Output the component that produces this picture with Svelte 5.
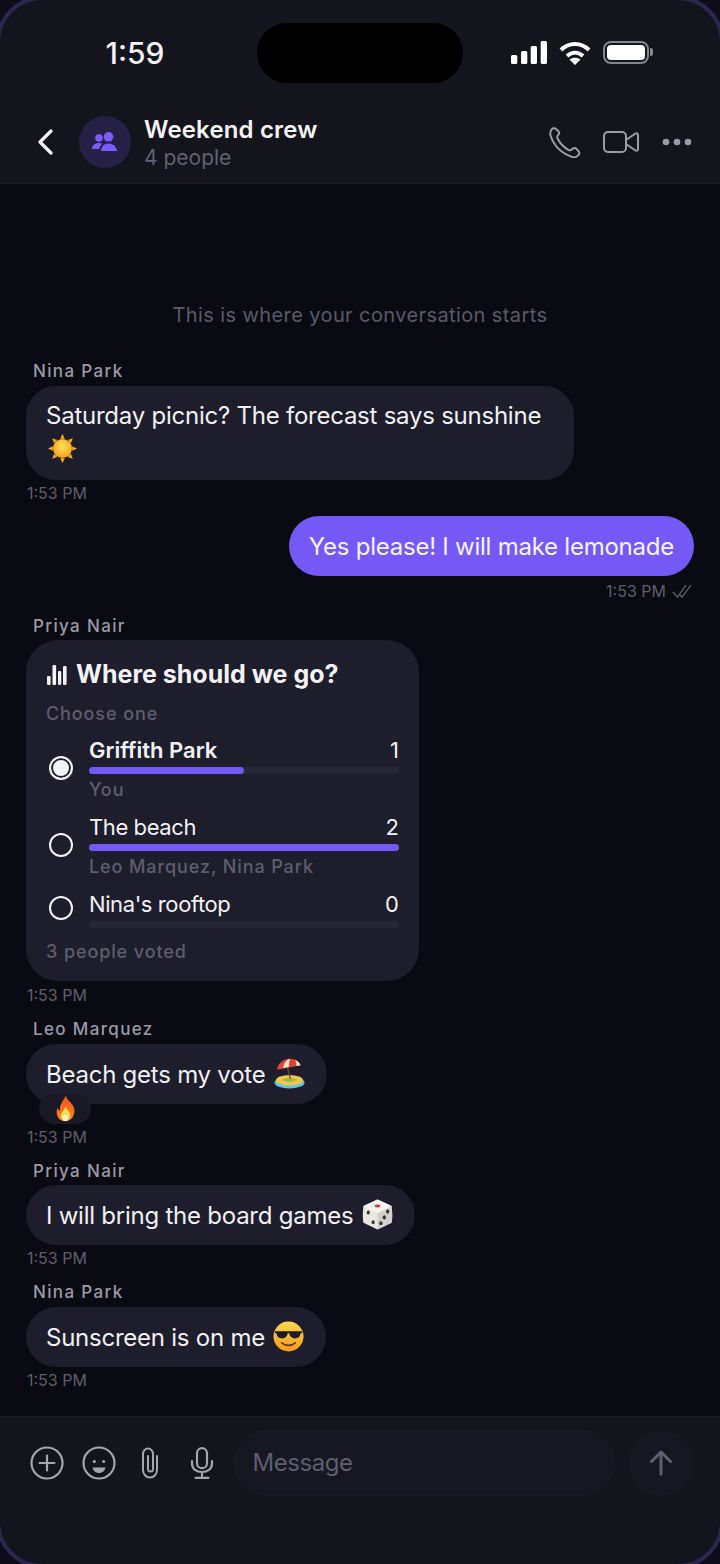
<script>
	const options = [
		{ name: 'Griffith Park', count: 1, pct: 50, voters: 'You', selected: true },
		{ name: 'The beach', count: 2, pct: 100, voters: 'Leo Marquez, Nina Park' },
		{ name: "Nina's rooftop", count: 0, pct: 0, voters: '' }
	];
</script>

{#snippet sun()}
	<svg class="emoji sun" viewBox="0 0 32 32">
		<defs>
			<radialGradient id="sun-fill" cx="0.5" cy="0.4" r="0.6">
				<stop offset="0%" stop-color="#ffe25a" />
				<stop offset="100%" stop-color="#f9a11b" />
			</radialGradient>
		</defs>
		<g fill="#f5ac1e">
			<path d="M16 1l2.400 5h-4.800zM16 31l-2.400-5h4.800zM1 16l5-2.400v4.800zM31 16l-5 2.400v-4.800z" />
			<path d="M5.400 5.400l5.200 1.900-3.300 3.300zM26.600 5.400l-1.900 5.200-3.300-3.300zM5.400 26.600l1.900-5.200 3.300 3.300zM26.600 26.600l-5.200-1.900 3.300-3.300z" />
		</g>
		<circle cx="16" cy="16" r="9.800" fill="url(#sun-fill)" />
	</svg>
{/snippet}

{#snippet beach()}
	<svg class="emoji" viewBox="0 0 32 32">
		<ellipse cx="16" cy="25.500" rx="15.500" ry="6" fill="#5cc6e8" />
		<ellipse cx="16" cy="23" rx="14" ry="5.500" fill="#f3c64f" />
		<path d="M8 22.500c4-2 12-2 16-.5-3 3.500-12 3.500-16 .5z" fill="#a3b83f" />
		<path d="M13.500 8.500l3.500 13" stroke="#6e4a2c" stroke-width="1.500" fill="none" />
		<path d="M3 12C4.500 3.500 13-1 21 1.500c3.500 1.100 5.500 3.500 6.500 6z" fill="#e2452f" />
		<path d="M9.500 10.500C10 6 12.500 2 16.500.8c-1 3-1.300 5.800-1 8.200zM21.500 1.700c1.400 1.300 1.800 3.700 1.500 6.500l4.500-.7c-1-2.700-3-4.800-6-5.800z" fill="#f6e7c6" />
	</svg>
{/snippet}

{#snippet fire()}
	<svg class="emoji" viewBox="0 0 32 32">
		<defs>
			<linearGradient id="fire-fill" x1="0" y1="0" x2="0" y2="1">
				<stop offset="0%" stop-color="#f4511e" />
				<stop offset="100%" stop-color="#fb8c1c" />
			</linearGradient>
		</defs>
		<path d="M16.500 1c1 5 7 8 9.300 13.500C28.500 21 24.500 31 16 31S3.500 22.500 6.500 15c.6 2 1.700 3.200 3 3.800C8.500 12 13 7 16.500 1z" fill="url(#fire-fill)" />
		<path d="M16 14c.8 3 5.500 5.500 5.500 10 0 3.500-2.500 7-5.500 7s-5.500-3.200-5.500-6.500C10.500 20 15 18 16 14z" fill="#ffd95a" />
		<ellipse cx="16" cy="27" rx="3.200" ry="3.800" fill="#fff3c4" />
	</svg>
{/snippet}

{#snippet dice()}
	<svg class="emoji" viewBox="0 0 32 32">
		<path d="M16 .5l14.500 6.700c.9 7.500.9 12 0 17.300L16 31.500 1.500 24.500c-.9-5.300-.9-9.800 0-17.300z" fill="#e9e7e3" />
		<path d="M16 14.500L30.500 7.200c.9 7.500.9 12 0 17.300L16 31.500z" fill="#d4d1cc" />
		<path d="M16 .5l14.500 6.700L16 14.500 1.500 7.200z" fill="#f6f5f2" />
		<ellipse cx="16" cy="7.300" rx="3" ry="1.500" fill="#d8392f" />
		<g fill="#35332f">
			<ellipse cx="6.500" cy="14" rx="1.600" ry="2.100" />
			<ellipse cx="11.500" cy="24" rx="1.600" ry="2.100" />
			<ellipse cx="26.500" cy="13" rx="1.700" ry="2.100" />
			<ellipse cx="23" cy="19" rx="1.700" ry="2.100" />
			<ellipse cx="19.500" cy="25" rx="1.700" ry="2.100" />
		</g>
	</svg>
{/snippet}

{#snippet cool()}
	<svg class="emoji" viewBox="0 0 32 32">
		<defs>
			<linearGradient id="cool-fill" x1="0" y1="0" x2="0" y2="1">
				<stop offset="0%" stop-color="#ffd84f" />
				<stop offset="100%" stop-color="#f59a1d" />
			</linearGradient>
		</defs>
		<circle cx="16" cy="16" r="15.500" fill="url(#cool-fill)" />
		<path d="M2 10.500h28v2.200h-1.500c-.4 3.600-2.700 5.300-6 5.300-3 0-5.200-1.800-5.700-5.300h-1.600c-.5 3.500-2.700 5.300-5.700 5.300-3.300 0-5.600-1.700-6-5.300H2z" fill="#1c1b1f" />
		<path d="M9 22.500c4 3.500 10 3.500 14 0" stroke="#6b3c12" stroke-width="1.700" stroke-linecap="round" fill="none" />
	</svg>
{/snippet}

<div class="phone">
	<header class="top">
		<div class="status">
			<div class="clock">1:59</div>
			<div class="island"></div>
			<div class="status-icons">
				<svg width="36" height="23" viewBox="0 0 36 23" fill="#fff">
					<rect x="0" y="14" width="6.300" height="9" rx="1.500" />
					<rect x="10" y="10" width="6.300" height="13" rx="1.500" />
					<rect x="19.700" y="5" width="6.300" height="18" rx="1.500" />
					<rect x="29.700" y="0" width="6.300" height="23" rx="1.500" />
				</svg>
				<svg width="32" height="24" viewBox="0 0 32 24" fill="none" stroke="#fff" stroke-width="4">
					<path d="M2 9c8-8 20-8 28 0" />
					<path d="M8 15c5-4.500 11-4.500 16 0" />
					<path d="M16 24l-5.500-5.500c3.200-2.300 7.800-2.300 11 0z" fill="#fff" stroke="none" />
				</svg>
				<div class="battery"><span></span></div>
			</div>
		</div>
		<div class="nav">
			<svg class="back" width="18" height="26" viewBox="0 0 18 26" fill="none" stroke="#f4f4f8" stroke-width="3.200" stroke-linecap="round" stroke-linejoin="round">
				<path d="M15 2L4 13l11 11" />
			</svg>
			<div class="avatar">
				<svg width="26" height="20" viewBox="0 0 26 20" fill="#7a5cff">
					<circle cx="7" cy="6" r="3.800" />
					<circle cx="16.500" cy="4.800" r="4.800" />
					<path d="M0 17c0-3.800 3-6 7-6 1.300 0 2.500.2 3.500.7C8.500 13 7.500 15 7.300 17z" />
					<path d="M9 19c0-4.500 3.200-7.500 7.500-7.500S24.500 14.500 25 19z" />
				</svg>
			</div>
			<div class="who">
				<div class="title">Weekend crew</div>
				<div class="sub">4 people</div>
			</div>
			<div class="actions">
				<svg width="32" height="32" viewBox="0 0 32 32" fill="none" stroke="#9c9ca8" stroke-width="2" stroke-linejoin="round">
					<path d="M2.500 3.500c1-1.300 3-1.800 4.200-.8l2.500 2.300c1 1 1.200 2 .6 3.200L8.500 10c-.5 1 -.3 1.800.2 2.800 2.500 4.800 6 8.500 10.600 11 1 .5 1.900.6 2.800 0l2.200-1.400c1.100-.6 2.200-.4 3.100.5l2.200 2.400c1 1.200.7 3-.4 4.100-1.500 1.500-3.800 2.300-6 1.600C12 27 4.500 19 1.600 9.500 1 7.300 1.500 5 2.500 3.500z" />
				</svg>
				<svg class="cam" width="36" height="22" viewBox="0 0 36 22" fill="none" stroke="#9c9ca8" stroke-width="2" stroke-linejoin="round">
					<rect x="1" y="1" width="22" height="20" rx="4" />
					<path d="M23 9l9.500-6.500c1-.6 2.500 0 2.500 1.300v14.400c0 1.300-1.500 1.900-2.500 1.300L23 13z" />
				</svg>
				<svg class="more" width="30" height="8" viewBox="0 0 30 8" fill="#9c9ca8">
					<circle cx="4" cy="4" r="3.300" />
					<circle cx="15" cy="4" r="3.300" />
					<circle cx="26" cy="4" r="3.300" />
				</svg>
			</div>
		</div>
	</header>

	<main class="thread">
		<p class="start">This is where your conversation starts</p>

		<section class="group">
			<div class="name">Nina Park</div>
			<div class="bubble wide">Saturday picnic? The forecast says sunshine {@render sun()}</div>
			<div class="time">1:53 PM</div>
		</section>

		<section class="group mine">
			<div class="bubble own">Yes please! I will make lemonade</div>
			<div class="time">
				1:53 PM
				<svg width="20" height="14" viewBox="0 0 20 14" fill="none" stroke="#6a6a78" stroke-width="1.200">
					<path d="M1 8l4.500 5L14 1" />
					<path d="M8 11l2 2L19 1" />
				</svg>
			</div>
		</section>

		<section class="group">
			<div class="name">Priya Nair</div>
			<div class="poll">
				<div class="poll-title">
					<svg width="20" height="22" viewBox="0 0 20 22" fill="#f4f4f8">
						<rect x="0" y="13" width="3.600" height="9" rx="1.200" />
						<rect x="5.500" y="2" width="3.600" height="20" rx="1.200" />
						<rect x="11" y="8" width="3.200" height="14" rx="1.200" />
						<rect x="16" y="3" width="3.600" height="19" rx="1.200" />
					</svg>
					Where should we go?
				</div>
				<div class="poll-note">Choose one</div>
				<div class="options">
					{#each options as opt (opt.name)}
						<div class="option">
							<div class="radio" class:on={opt.selected}></div>
							<div class="opt-body">
								<div class="opt-row">
									<span class="opt-name" class:chosen={opt.selected}>{opt.name}</span>
									<span class="opt-count">{opt.count}</span>
								</div>
								<div class="track"><div class="fill" style="width: {opt.pct}%"></div></div>
								{#if opt.voters}
									<div class="voters">{opt.voters}</div>
								{/if}
							</div>
						</div>
					{/each}
				</div>
				<div class="poll-foot">3 people voted</div>
			</div>
			<div class="time">1:53 PM</div>
		</section>

		<section class="group">
			<div class="name">Leo Marquez</div>
			<div class="bubble">Beach gets my vote {@render beach()}</div>
			<div class="reaction">{@render fire()}</div>
			<div class="time">1:53 PM</div>
		</section>

		<section class="group">
			<div class="name">Priya Nair</div>
			<div class="bubble">I will bring the board games {@render dice()}</div>
			<div class="time">1:53 PM</div>
		</section>

		<section class="group">
			<div class="name">Nina Park</div>
			<div class="bubble">Sunscreen is on me {@render cool()}</div>
			<div class="time">1:53 PM</div>
		</section>
	</main>

	<footer class="composer">
		<div class="tools">
			<div class="tool">
				<svg width="34" height="34" viewBox="0 0 34 34" fill="none" stroke="#a5a5b0" stroke-width="2.200" stroke-linecap="round">
					<circle cx="17" cy="17" r="15.500" />
					<path d="M17 9.500v15M9.500 17h15" />
				</svg>
			</div>
			<div class="tool">
				<svg width="34" height="34" viewBox="0 0 34 34" fill="none" stroke="#a5a5b0" stroke-width="2.200">
					<circle cx="17" cy="17" r="15.500" />
					<circle cx="12.300" cy="15.500" r="1.600" fill="#a5a5b0" stroke="none" />
					<circle cx="21.700" cy="15.500" r="1.600" fill="#a5a5b0" stroke="none" />
					<path d="M10.500 21.500h13c-.6 3.400-3.200 5.500-6.500 5.500s-5.900-2.100-6.500-5.500z" fill="#a5a5b0" stroke="none" />
				</svg>
			</div>
			<div class="tool">
				<svg width="18" height="32" viewBox="0 0 18 32" fill="none" stroke="#a5a5b0" stroke-width="2" stroke-linecap="round">
					<path d="M16 9v14a7 7.500 0 0 1-14 0V7a5 5.500 0 0 1 10 0v15a2.500 2.500 0 0 1-5 0V9" />
				</svg>
			</div>
			<div class="tool">
				<svg width="24" height="32" viewBox="0 0 24 32" fill="none" stroke="#a5a5b0" stroke-width="2.200" stroke-linecap="round">
					<rect x="7" y="1.200" width="10" height="20" rx="5" />
					<path d="M2 14v2.500c0 5.500 4.500 8.500 10 8.500s10-3 10-8.500V14M12 25v5.500M5.500 30.800h13" />
				</svg>
			</div>
		</div>
		<div class="field">Message</div>
		<div class="send">
			<svg width="24" height="26" viewBox="0 0 24 26" fill="none" stroke="#5f5f72" stroke-width="3" stroke-linecap="round" stroke-linejoin="round">
				<path d="M12 24V2M2.500 11.500L12 2l9.500 9.500" />
			</svg>
		</div>
	</footer>

	<div class="corners"></div>
</div>

<style>
	:global(body) {
		margin: 0;
		background: #0a0a12;
	}

	.phone {
		position: relative;
		width: 720px;
		height: 1564px;
		display: flex;
		flex-direction: column;
		overflow: hidden;
		background: #0a0a12;
		color: #f2f2f7;
		font-family: Inter, 'Noto Sans', sans-serif;
	}

	.corners {
		position: absolute;
		inset: -4px;
		border: 4px solid #2c2650;
		border-radius: 46px;
		box-shadow: 0 0 0 20px #0e0c1a;
		pointer-events: none;
	}

	.top {
		flex: none;
		height: 160px;
		padding-top: 23px;
		background: #14141d;
		border-bottom: 1px solid #1c1c27;
	}

	.status {
		display: flex;
		align-items: center;
		height: 60px;
	}

	.clock {
		flex: none;
		box-sizing: border-box;
		width: 257px;
		padding-left: 13px;
		text-align: center;
		font-size: 30px;
		font-weight: 500;
		line-height: 60px;
	}

	.island {
		flex: none;
		width: 206px;
		height: 60px;
		border-radius: 30px;
		background: #000;
	}

	.status-icons {
		flex: 1;
		display: flex;
		align-items: center;
		gap: 12px;
		padding-left: 48px;
		margin-top: -1px;
	}

	.battery {
		position: relative;
		width: 46px;
		height: 23px;
		box-sizing: border-box;
		border: 2px solid #85858f;
		border-radius: 8px;
		padding: 2px;
	}

	.battery span {
		display: block;
		height: 100%;
		border-radius: 4px;
		background: #fff;
	}

	.battery::after {
		content: '';
		position: absolute;
		right: -6px;
		top: 5px;
		width: 3px;
		height: 8px;
		border-radius: 0 2px 2px 0;
		background: #85858f;
	}

	.nav {
		display: flex;
		align-items: center;
		height: 52px;
		margin-top: 33px;
		padding: 0 28px 0 36px;
	}

	.back {
		flex: none;
		margin-right: 25px;
	}

	.avatar {
		flex: none;
		width: 52px;
		height: 52px;
		border-radius: 50%;
		background: #272046;
		display: flex;
		align-items: center;
		justify-content: center;
	}

	.who {
		flex: 1;
		margin: 4px 0 0 13px;
	}

	.title {
		font-size: 24px;
		font-weight: 600;
		line-height: 28px;
		letter-spacing: 0.15px;
	}

	.sub {
		font-size: 21px;
		line-height: 28px;
		color: #62626f;
	}

	.actions {
		display: flex;
		align-items: center;
	}

	.cam {
		margin-left: 22px;
	}

	.more {
		margin-left: 23px;
	}

	.thread {
		flex: 1;
		display: flex;
		flex-direction: column;
		gap: 13px;
		padding: 118px 26px 0;
	}

	.start {
		margin: 0 0 19px;
		text-align: center;
		font-size: 20px;
		line-height: 26px;
		letter-spacing: 0.4px;
		color: #5a5a69;
	}

	.group {
		display: flex;
		flex-direction: column;
		align-items: flex-start;
	}

	.group.mine {
		align-items: flex-end;
		padding-bottom: 1px;
	}

	.name {
		height: 22px;
		line-height: 22px;
		margin: 0 0 3.500px 7px;
		font-size: 17px;
		font-weight: 500;
		letter-spacing: 1.35px;
		color: #9b9ba8;
	}

	.bubble {
		box-sizing: border-box;
		padding: 14px 20px 12px;
		border-radius: 30px;
		background: #1e1d2c;
		font-size: 24px;
		line-height: 34px;
		letter-spacing: -0.24px;
		color: #f0f0f5;
	}

	.bubble.wide {
		width: 548px;
		padding: 13px 20px;
	}

	.bubble.own {
		background: #7559f6;
		color: #f5f2ff;
	}

	.emoji {
		display: inline-block;
		width: 31px;
		height: 31px;
		vertical-align: -6px;
		margin-left: 2px;
		margin-right: 2px;
	}

	.emoji.sun {
		margin-left: 1px;
	}

	.time {
		display: flex;
		align-items: center;
		gap: 6px;
		height: 20px;
		line-height: 20px;
		margin: 3px 0 0 1px;
		font-size: 16px;
		color: #5e5e6c;
	}

	.mine .time {
		margin: 5px 2px 0 0;
	}

	.poll {
		box-sizing: border-box;
		width: 393px;
		height: 341px;
		margin-bottom: 1px;
		padding: 18px 20px 0;
		border-radius: 32px;
		background: #1e1d2c;
	}

	.poll-title {
		display: flex;
		align-items: center;
		gap: 9px;
		font-size: 25px;
		font-weight: 700;
		line-height: 32px;
		padding-left: 1px;
	}

	.poll-note,
	.poll-foot,
	.voters {
		font-size: 18px;
		font-weight: 500;
		line-height: 24px;
		letter-spacing: 0.9px;
		color: #5e5e6e;
	}

	.poll-note {
		margin-top: 12px;
	}

	.options {
		display: flex;
		flex-direction: column;
		gap: 11px;
		margin-top: 10px;
	}

	.option {
		display: flex;
		align-items: center;
	}

	.radio {
		flex: none;
		position: relative;
		top: -1px;
		width: 24px;
		height: 24px;
		margin: 0 16px 0 3px;
		box-sizing: border-box;
		border: 2px solid #f2f2f7;
		border-radius: 50%;
	}

	.radio.on {
		background: #f2f2f7;
		box-shadow: inset 0 0 0 2px #1e1d2c;
	}

	.opt-body {
		flex: 1;
	}

	.opt-row {
		display: flex;
		justify-content: space-between;
		font-size: 22px;
		line-height: 28px;
	}

	.opt-name {
		letter-spacing: -0.4px;
	}

	.opt-name.chosen {
		font-weight: 600;
		letter-spacing: 0;
	}

	.track {
		height: 7px;
		margin-top: 3px;
		border-radius: 4px;
		background: #262635;
	}

	.fill {
		height: 100%;
		border-radius: 4px;
		background: #7559f6;
	}

	.voters {
		margin-top: 4px;
	}

	.poll-foot {
		margin-top: 12px;
	}

	.reaction {
		display: flex;
		align-items: center;
		justify-content: center;
		width: 52px;
		height: 30px;
		margin: -10px 0 0 13px;
		border-radius: 15px;
		background: #191925;
	}

	.reaction .emoji {
		width: 27px;
		height: 27px;
		margin: 0;
	}

	.composer {
		flex: none;
		height: 148px;
		box-sizing: border-box;
		display: flex;
		align-items: flex-start;
		padding: 13px 26px 0 30px;
		background: #14141d;
		border-top: 1px solid #1c1c27;
	}

	.tools {
		display: flex;
		align-items: center;
		height: 66px;
		gap: 17.500px;
	}

	.tool {
		width: 34px;
		display: flex;
		justify-content: center;
	}

	.field {
		flex: 1;
		box-sizing: border-box;
		height: 66px;
		margin: 0 13px 0 15px;
		padding: 0 18px;
		line-height: 64px;
		font-size: 24px;
		letter-spacing: -0.45px;
		color: #5e5e6e;
		background: #171721;
		border: 1px solid #1c1c28;
		border-radius: 33px;
	}

	.send {
		flex: none;
		width: 66px;
		height: 66px;
		border-radius: 50%;
		background: #171721;
		display: flex;
		align-items: center;
		justify-content: center;
	}
</style>
